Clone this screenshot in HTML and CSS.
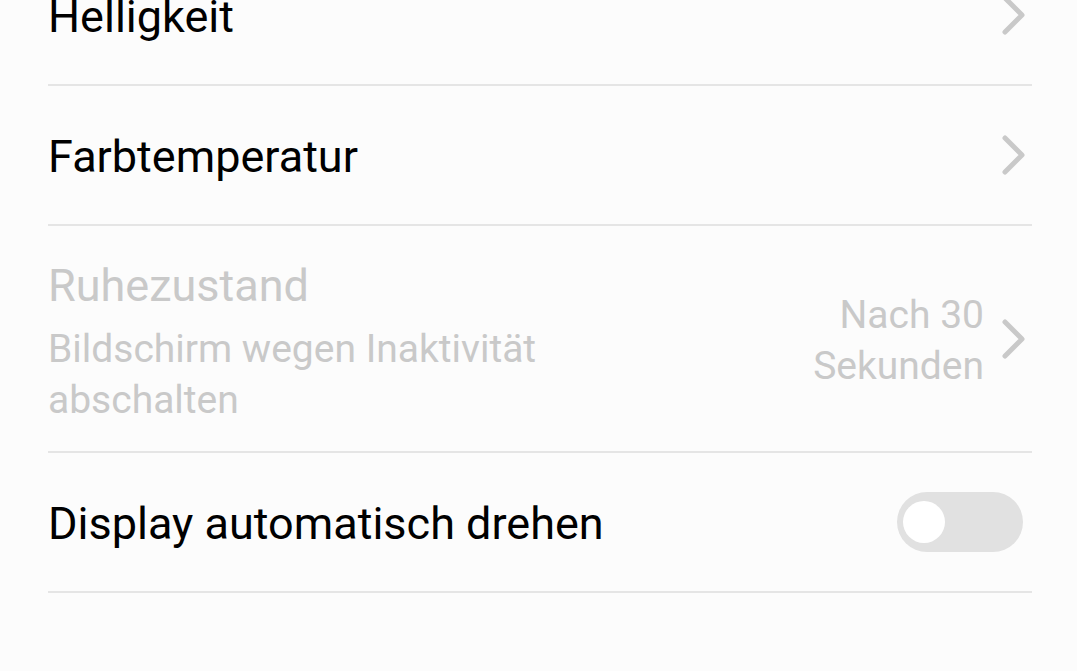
FILE: index.html
```html
<!DOCTYPE html>
<html lang="de">
<head>
    <meta charset="UTF-8">
    <meta name="viewport" content="width=device-width, initial-scale=1.0">
    <title>Display</title>
    <link rel="stylesheet" href="styles.css">
</head>
<body>
    <main class="settings">
        <a href="#helligkeit" class="row row-first">
            <span class="title">Helligkeit</span>
            <svg class="arrow" viewBox="0 0 24 40"><path d="M3 3 L20 20 L3 37"/></svg>
        </a>
        <a href="#farbtemperatur" class="row">
            <span class="title">Farbtemperatur</span>
            <svg class="arrow" viewBox="0 0 24 40"><path d="M3 3 L20 20 L3 37"/></svg>
        </a>
        <a href="#ruhezustand" class="row row-disabled" aria-disabled="true">
            <span class="text">
                <span class="title">Ruhezustand</span>
                <span class="summary">Bildschirm wegen Inaktivität abschalten</span>
            </span>
            <span class="value">Nach 30 Sekunden</span>
            <svg class="arrow" viewBox="0 0 24 40"><path d="M3 3 L20 20 L3 37"/></svg>
        </a>
        <div class="row">
            <label class="title" for="autoRotate">Display automatisch drehen</label>
            <input type="checkbox" role="switch" class="switch" id="autoRotate">
        </div>
    </main>
</body>
</html>
```
FILE: styles.css
```css
* {
    box-sizing: border-box;
}
body {
    margin: 0;
    background-color: #fcfcfc;
    color: #000;
    font-family: Roboto, sans-serif;
    overflow: hidden;
}
.settings {
    padding: 0 45px 0 48px;
}
.row {
    display: flex;
    align-items: center;
    min-height: 140px;
    padding-right: 6px;
    border-bottom: 2px solid #e5e5e5;
    color: inherit;
    text-decoration: none;
}
/* scrolled partly out of view */
.row-first {
    margin-top: -54px;
}
.title {
    flex: 1;
    padding-top: 4px;
    font-size: 45px;
    line-height: 60px;
}
.arrow {
    width: 24px;
    height: 40px;
    flex-shrink: 0;
    fill: none;
    stroke: #c9c9c9;
    stroke-width: 5px;
    stroke-linecap: round;
    stroke-linejoin: round;
}
.row-disabled {
    min-height: 227px;
    color: #c9c9c9;
}
.text {
    display: flex;
    flex-direction: column;
    flex: 1;
    gap: 8px;
}
.summary {
    max-width: 560px;
    font-size: 39px;
    line-height: 51px;
}
.value {
    width: 200px;
    margin-right: 18px;
    padding-top: 4px;
    font-size: 39px;
    line-height: 51px;
    text-align: right;
}
.switch {
    appearance: none;
    display: flex;
    align-items: center;
    width: 126px;
    height: 60px;
    margin: 0 3px 0 0;
    padding: 6px;
    border-radius: 30px;
    background-color: #e1e1e1;
    cursor: pointer;
}
.switch::before {
    content: "";
    width: 42px;
    height: 42px;
    border-radius: 50%;
    background-color: #fff;
}
.switch:checked {
    justify-content: flex-end;
    background-color: #007dff;
}
```
